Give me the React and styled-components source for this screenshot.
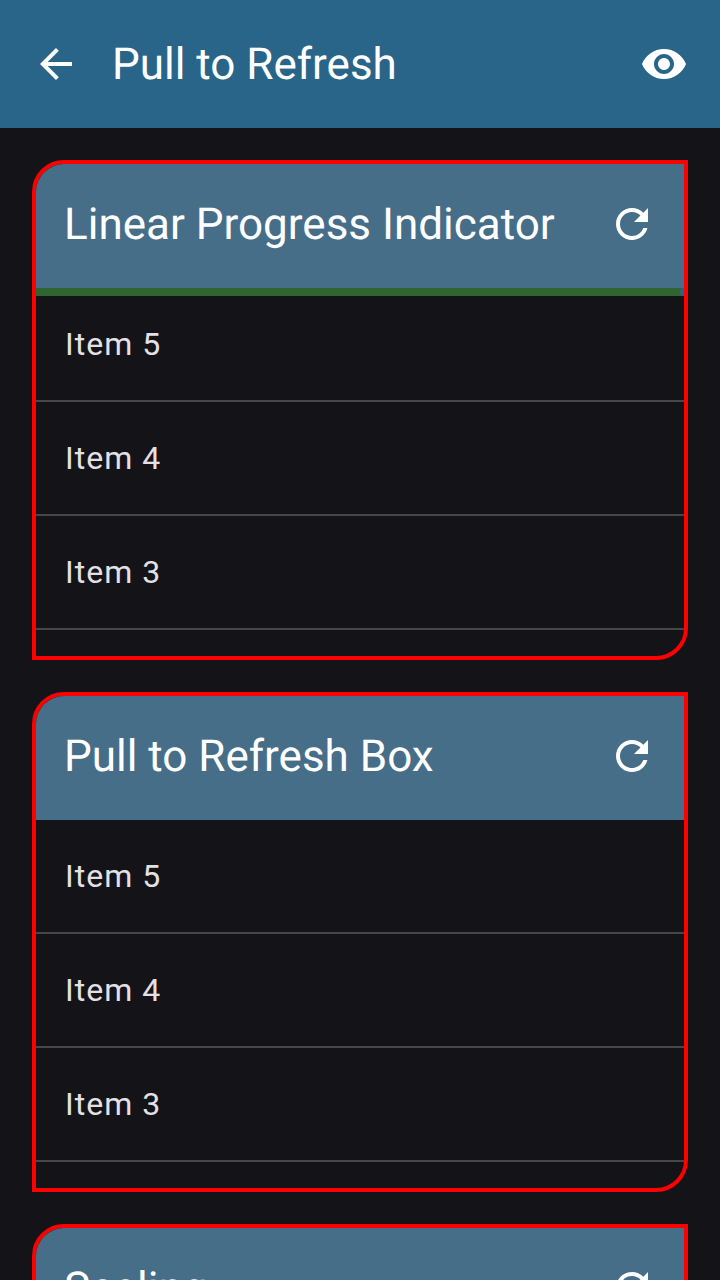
import React from 'react';
import styled, { createGlobalStyle } from 'styled-components';

const GlobalStyle = createGlobalStyle`
  * { box-sizing: border-box; }
  body {
    margin: 0;
    background: #141318;
    font-family: Roboto, "Liberation Sans", sans-serif;
    overflow: hidden;
  }
`;

const Screen = styled.div`
  height: 1280px;
  width: 720px;
  overflow: hidden;
  display: flex;
  flex-direction: column;
  background: #141318;
`;

const AppBar = styled.header`
  flex: none;
  height: 128px;
  padding: 0 32px;
  display: flex;
  align-items: center;
  background: #296588;
  color: #fff;
`;

const Title = styled.h1`
  flex: 1;
  margin: 0;
  font-size: 44px;
  line-height: 56px;
  font-weight: 400;
  white-space: nowrap;
  text-rendering: geometricPrecision;
`;

const AppTitle = styled(Title)`
  margin-left: 32px;
`;

const Icon = styled.svg`
  display: block;
  flex: none;
  width: 48px;
  height: 48px;
  fill: currentColor;
`;

const Content = styled.main`
  flex: 1;
  min-height: 0;
  padding: 32px;
  display: flex;
  flex-direction: column;
  gap: 32px;
`;

const Card = styled.section`
  flex: none;
  height: 500px;
  overflow: hidden;
  border: 4px solid #fe0000;
  border-radius: 32px 0 32px 0;
`;

const CardHeader = styled.div`
  height: 124px;
  padding: 0 28px 4px;
  display: flex;
  align-items: center;
  background: #466e88;
  color: #fff;
`;

const ProgressTrack = styled.div`
  display: flex;
  justify-content: flex-end;
  height: 8px;
  margin-bottom: -8px;
  background: #306532;
`;

const ProgressStop = styled.div`
  width: 4px;
  height: 8px;
  border-radius: 4px 0 0 4px;
  background: #296589;
`;

const Item = styled.div`
  height: 114px;
  padding: 0 29px;
  display: flex;
  align-items: center;
  border-bottom: 2px solid #47464a;
  color: #e4e1e6;
  font-size: 32px;
  letter-spacing: 1px;
`;

const BackIcon = () => (
  <Icon viewBox="0 0 24 24"><path d="M20 11H7.83l5.59-5.59L12 4l-8 8 8 8 1.41-1.41L7.83 13H20v-2z" /></Icon>
);
const EyeIcon = () => (
  <Icon viewBox="0 0 24 24"><path d="M12 4.5C7 4.5 2.73 7.61 1 12c1.73 4.39 6 7.5 11 7.5s9.27-3.11 11-7.5c-1.73-4.39-6-7.5-11-7.5zM12 17c-2.76 0-5-2.24-5-5s2.24-5 5-5 5 2.24 5 5-2.24 5-5 5zm0-8c-1.66 0-3 1.34-3 3s1.34 3 3 3 3-1.34 3-3-1.34-3-3-3z" /></Icon>
);
const RefreshIcon = () => (
  <Icon viewBox="0 0 24 24"><path d="M17.65 6.35C16.2 4.9 14.21 4 12 4c-4.42 0-7.99 3.58-7.99 8s3.57 8 7.99 8c3.73 0 6.84-2.55 7.73-6h-2.08c-.82 2.33-3.04 4-5.65 4-3.31 0-6-2.69-6-6s2.69-6 6-6c1.66 0 3.14.69 4.22 1.78L13 11h7V4l-2.35 2.35z" /></Icon>
);

const items = ['Item 5', 'Item 4', 'Item 3'];

const RefreshCard = ({ title, progress }) => (
  <Card>
    <CardHeader>
      <Title as="h2">{title}</Title>
      <RefreshIcon />
    </CardHeader>
    {progress && <ProgressTrack><ProgressStop /></ProgressTrack>}
    {items.map((item) => <Item key={item}>{item}</Item>)}
  </Card>
);

export default function App() {
  return (
    <Screen>
      <GlobalStyle />
      <AppBar>
        <BackIcon />
        <AppTitle>Pull to Refresh</AppTitle>
        <EyeIcon />
      </AppBar>
      <Content>
        <RefreshCard title="Linear Progress Indicator" progress />
        <RefreshCard title="Pull to Refresh Box" />
        <RefreshCard title="Scaling" />
      </Content>
    </Screen>
  );
}
